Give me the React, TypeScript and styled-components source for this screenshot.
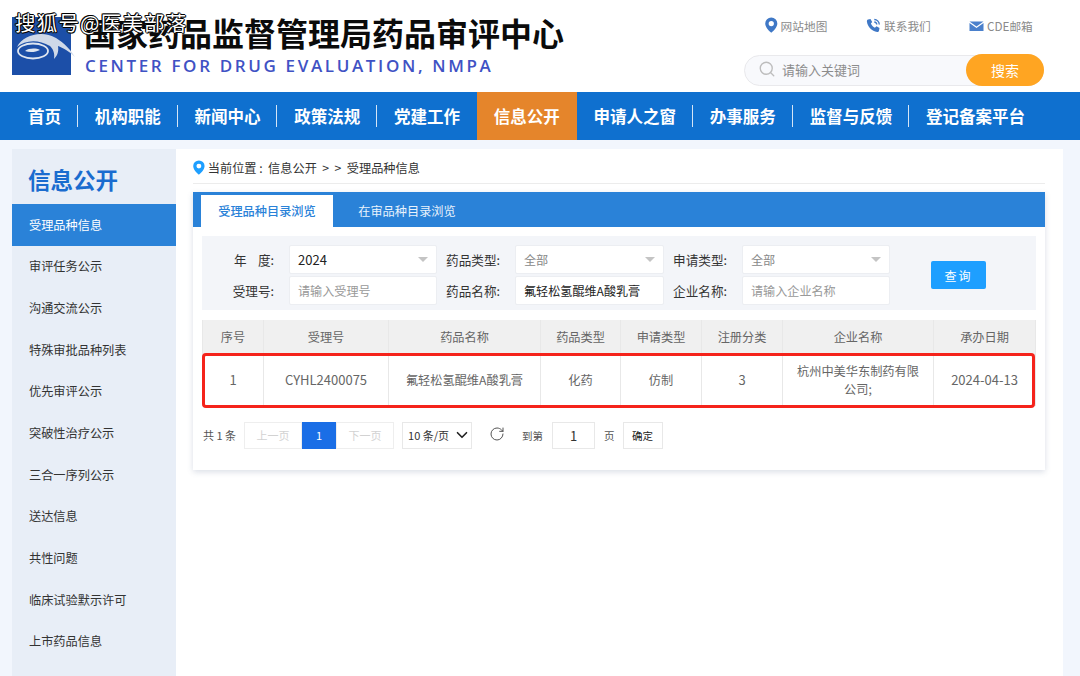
import React from "react";
import styled, { createGlobalStyle } from "styled-components";
import { ChevronDown, RotateCw, Search } from "lucide-react";

const Global = createGlobalStyle`
  html, body { margin: 0; padding: 0; background: #f2f6fd; }
  body { font-family: "Noto Sans CJK SC", "Noto Sans", sans-serif; overflow: hidden; }
  * { box-sizing: border-box; }
`;

const Page = styled.div`
  position: relative;
  width: 1080px;
  height: 676px;
  overflow: hidden;
`;

const Watermark = styled.div`
  position: absolute;
  left: 15px;
  top: 7px;
  font-size: 20.5px;
  line-height: 30px;
  color: #fff;
  letter-spacing: 1.2px;
  text-shadow: 1px 0 0 #000, -1px 0 0 #000, 0 1px 0 #000, 0 -1px 0 #000, 1px 1px 0 #222, -1px -1px 0 #222;
  z-index: 5;
`;

const Header = styled.header`
  height: 92px;
  background: #fff;
  display: flex;
  justify-content: space-between;
  padding: 17px 36px 0 12px;
`;

const Brand = styled.div`
  display: flex;
  gap: 13px;
  align-items: flex-start;
`;

const BrandText = styled.div`
  display: flex;
  flex-direction: column;
`;

const BrandTitle = styled.div`
  font-size: 32px;
  line-height: 30px;
  font-weight: 700;
  color: #0b0b0b;
  white-space: nowrap;
`;

const BrandSub = styled.div`
  margin-top: 9px;
  margin-left: 1px;
  font-family: "Open Sans", sans-serif;
  font-size: 17px;
  line-height: 20px;
  font-weight: 600;
  letter-spacing: 2.64px;
  color: #3f52c4;
  white-space: nowrap;
`;

const HeaderRight = styled.div`
  width: 300px;
  display: flex;
  flex-direction: column;
  align-items: flex-end;
`;

const TopLinks = styled.div`
  display: flex;
  height: 20px;
  margin: -2px 10px 0 0;
  align-items: center;
`;

const TopLink = styled.div<{ $w: number }>`
  width: ${(p) => p.$w}px;
  display: flex;
  align-items: center;
  gap: 3px;
  font-size: 11.7px;
  color: #8a8a8a;
  white-space: nowrap;
`;

const SearchBar = styled.div`
  margin-top: 20px;
  width: 300px;
  height: 31px;
  position: relative;
  display: flex;
  align-items: center;
  padding: 0 0 3px 13px;
  gap: 6px;
  background: #f8f9fc;
  border: 1px solid #e9e9ec;
  border-radius: 16px;
  font-size: 13px;
  color: #8c8c8c;
`;

const SearchBtn = styled.div`
  position: absolute;
  right: -1px;
  top: -2px;
  width: 78px;
  height: 32px;
  border-radius: 16px;
  background: #ffa522;
  color: #fff;
  font-size: 14px;
  display: flex;
  align-items: center;
  justify-content: center;
`;

const Nav = styled.nav`
  height: 48px;
  background: #0f70cf;
  display: flex;
  align-items: center;
  padding-left: 11px;
`;

const NavItem = styled.div<{ $active?: boolean; $sep?: boolean }>`
  height: 48px;
  padding: 0 16.9px;
  display: flex;
  align-items: center;
  font-size: 16.5px;
  font-weight: 700;
  color: #fff;
  white-space: nowrap;
  position: relative;
  background: ${(p) => (p.$active ? "#e5852b" : "transparent")};
  &::after {
    content: "";
    display: ${(p) => (p.$sep ? "block" : "none")};
    position: absolute;
    right: 0;
    top: 13px;
    width: 1px;
    height: 22px;
    background: #d5e5f6;
  }
`;

const Body = styled.div`
  margin: 9px 18px 0 12px;
  display: flex;
  height: 527px;
`;

const Side = styled.aside`
  width: 164px;
  background: #e8eef7;
  flex: none;
`;

const SideTitle = styled.div`
  height: 55px;
  padding: 14px 0 0 16px;
  font-size: 22.5px;
  line-height: 32px;
  font-weight: 700;
  color: #1a6ccf;
`;

const SideItem = styled.div<{ $active?: boolean }>`
  height: 41.65px;
  padding-left: 17px;
  display: flex;
  align-items: center;
  font-size: 12.2px;
  color: ${(p) => (p.$active ? "#fff" : "#333")};
  background: ${(p) => (p.$active ? "#2a82d8" : "transparent")};
`;

const Main = styled.main`
  flex: 1;
  background: #fff;
  padding: 0 18px 0 17px;
`;

const Crumb = styled.div`
  height: 35px;
  display: flex;
  align-items: center;
  gap: 3px;
  padding-top: 3px;
  border-bottom: 1px solid #ececec;
  font-size: 12.2px;
  color: #333;
  white-space: pre;
`;

const Card = styled.section`
  margin-top: 8px;
  height: 278px;
  background: #fff;
  box-shadow: 0 2px 6px rgba(70, 90, 130, 0.2);
`;

const Tabs = styled.div`
  height: 35px;
  background: #2a82d8;
  display: flex;
  align-items: flex-end;
  padding-left: 8px;
`;

const Tab = styled.div<{ $active?: boolean }>`
  width: ${(p) => (p.$active ? 132 : 148)}px;
  height: 32px;
  display: flex;
  align-items: center;
  justify-content: center;
  font-size: 12.2px;
  font-weight: ${(p) => (p.$active ? 500 : 400)};
  color: ${(p) => (p.$active ? "#2a82d8" : "#e8f2fc")};
  background: ${(p) => (p.$active ? "#fff" : "transparent")};
`;

const CardBody = styled.div`
  padding: 9px 9px 0;
`;

const Filter = styled.div`
  height: 74px;
  background: #f3f5f9;
  padding-top: 9px;
  display: grid;
  grid-template-columns: 87px 148px 78px 149px 78px 148px 1fr;
  grid-template-rows: 29px 29px;
  row-gap: 2px;
  align-items: center;
`;

const Label = styled.div`
  text-align: right;
  padding: 0 15px 1px 0;
  font-size: 12.6px;
  color: #333;
  white-space: pre;
`;

const Field = styled.div<{ $dark?: boolean; $hint?: boolean; $num?: boolean }>`
  height: 29px;
  background: #fff;
  border: 1px solid #eceef2;
  border-radius: 2px;
  display: flex;
  align-items: center;
  justify-content: space-between;
  padding: 0 8px 1px 8px;
  font-size: ${(p) => (p.$num ? 13 : 12.1)}px;
  color: ${(p) => (p.$dark ? "#222" : p.$hint ? "#999" : "#888")};
  white-space: nowrap;
`;

const Caret = styled.span`
  width: 0;
  height: 0;
  border-left: 5px solid transparent;
  border-right: 5px solid transparent;
  border-top: 5px solid #c4c4c4;
`;

const QueryCell = styled.div`
  grid-column: 7;
  grid-row: 1 / span 2;
  padding-left: 41px;
`;

const QueryBtn = styled.div`
  width: 55px;
  height: 28px;
  border-radius: 2px;
  background: #1e9fff;
  color: #fff;
  font-size: 12px;
  letter-spacing: 2px;
  display: flex;
  align-items: center;
  justify-content: center;
`;

const TableWrap = styled.div`
  position: relative;
  margin-top: 10px;
`;

const Table = styled.table`
  width: 833px;
  table-layout: fixed;
  border-collapse: collapse;
  font-size: 12.2px;
  color: #666;
  text-align: center;
`;

const Th = styled.th`
  height: 34px;
  padding: 0;
  background: #f0f0f0;
  font-weight: 400;
  border: 1px solid #e8e8e8;
  border-top: 0;
`;

const Td = styled.td<{ $num?: boolean }>`
  height: 51px;
  padding: 0 12px;
  line-height: 18px;
  font-size: ${(p) => (p.$num ? 13 : 12.2)}px;
  border: 1px solid #e8e8e8;
`;

const Highlight = styled.div`
  position: absolute;
  left: 0;
  top: 33px;
  width: 833px;
  height: 55px;
  border: 3px solid #f5231b;
  border-radius: 4px;
  pointer-events: none;
`;

const Pager = styled.div`
  margin-top: 16px;
  height: 27px;
  display: flex;
  align-items: center;
  font-size: 11px;
  color: #555;
`;

const PagerCount = styled.span`
  margin: 0 8px 0 1px;
  white-space: pre;
`;

const PageBtn = styled.div<{ $w: number; $active?: boolean; $muted?: boolean }>`
  width: ${(p) => p.$w}px;
  height: 27px;
  display: flex;
  align-items: center;
  justify-content: center;
  border: 1px solid ${(p) => (p.$active ? "#1a6ee6" : "#eeeeee")};
  background: ${(p) => (p.$active ? "#1a6ee6" : "#fff")};
  color: ${(p) => (p.$active ? "#fff" : p.$muted ? "#d2d2d2" : "#333")};
  font-size: 11px;
`;

const SizeSelect = styled.div`
  margin-left: 8px;
  width: 70px;
  height: 27px;
  border: 1px solid #e8e8e8;
  padding: 0 0 0 5px;
  display: flex;
  align-items: center;
  justify-content: space-between;
  font-size: 11px;
  color: #333;
  white-space: nowrap;
`;

const RefreshSlot = styled.div`
  margin: 0 0 3px 17px;
  width: 16px;
  display: flex;
  color: #555;
`;

const PagerText = styled.span<{ $l: number; $r: number }>`
  margin: 0 ${(p) => p.$r}px 0 ${(p) => p.$l}px;
  font-size: 10.5px;
  white-space: nowrap;
`;

const PagerInput = styled(PageBtn)`
  font-size: 13px;
  border-color: #e8e8e8;
`;

const ConfirmBtn = styled(PageBtn)`
  font-size: 10.5px;
  border-color: #e8e8e8;
  color: #222;
`;

const Pin = ({ c, s }: { c: string; s: number }) => (
  <svg width={(s * 11) / 14} height={s} viewBox="1.5 0 11 14" aria-hidden="true">
    <path
      fillRule="evenodd"
      d="M7 0.400a5.300 5.300 0 0 1 5.300 5.300c0 3.300-3.600 6.800-5.300 8.100-1.700-1.300-5.300-4.800-5.300-8.100A5.300 5.300 0 0 1 7 0.400zm0 3a2.300 2.300 0 1 0 0 4.600 2.300 2.300 0 0 0 0-4.600z"
      fill={c}
    />
  </svg>
);

const Phone = () => (
  <svg width="15" height="15" viewBox="0 0 15 15" aria-hidden="true">
    <path d="M2 1.500 4.500 1l1.700 3-1.300 1.500c.7 1.700 2.200 3.300 4 4.200L10.500 8.300l3 1.700-.5 2.800c-.2.900-1 1.300-1.900 1.200C6 13.300 1.500 9 .9 3.600.8 2.600 1.200 1.800 2 1.500z" fill="#3f78c6" />
    <path d="M8.300 1.500a5.300 5.300 0 0 1 5 5M8.300 4a2.800 2.800 0 0 1 2.500 2.500" fill="none" stroke="#3f78c6" strokeWidth="1.300" />
  </svg>
);

const Mail = () => (
  <svg width="15" height="15" viewBox="0 0 15 15" aria-hidden="true">
    <path d="M0.500 3.500h14L7.500 8.500z" fill="#4a80cc" />
    <path d="M0.500 5v8h14V5L7.500 10z" fill="#4a80cc" />
  </svg>
);

const LogoSvg = styled.svg`
  flex: none;
  overflow: visible;
`;

const Logo = () => (
  <LogoSvg width="59" height="58" viewBox="0 0 59 58" aria-hidden="true">
    <rect width="59" height="58" fill="#1c4fa8" />
    <path d="M5 30C11 18 30 13 44 21c8 5 15 12 19 19-6-6-12-9-17-11 1 6-1 10-4 13 1-6-1-10-4-13C26 22 13 23 5 30z" fill="#cfd9e8" />
    <ellipse cx="21" cy="34" rx="15" ry="7.500" fill="none" stroke="#dfe6f0" strokeWidth="1.800" />
    <path d="M13 34c4-3 11-3 15-1-4 2-10 3-15 1z" fill="#dfe6f0" />
  </LogoSvg>
);

const navs = ["首页", "机构职能", "新闻中心", "政策法规", "党建工作", "信息公开", "申请人之窗", "办事服务", "监督与反馈", "登记备案平台"];
const sides = ["受理品种信息", "审评任务公示", "沟通交流公示", "特殊审批品种列表", "优先审评公示", "突破性治疗公示", "三合一序列公示", "送达信息", "共性问题", "临床试验默示许可", "上市药品信息"];
const cols = [61, 125, 152, 80, 81, 81, 151, 102];
const heads = ["序号", "受理号", "药品名称", "药品类型", "申请类型", "注册分类", "企业名称", "承办日期"];
const row = ["1", "CYHL2400075", "氟轻松氢醌维A酸乳膏", "化药", "仿制", "3", "杭州中美华东制药有限公司;", "2024-04-13"];
const numeric = new Set([0, 1, 5, 7]);

export default function App() {
  return (
    <Page>
      <Global />
      <Watermark>搜狐号@医美部落</Watermark>
      <Header>
        <Brand>
          <Logo />
          <BrandText>
            <BrandTitle>国家药品监督管理局药品审评中心</BrandTitle>
            <BrandSub>CENTER FOR DRUG EVALUATION, NMPA</BrandSub>
          </BrandText>
        </Brand>
        <HeaderRight>
          <TopLinks>
            <TopLink $w={101}>
              <Pin c="#3f78c6" s={16} />
              网站地图
            </TopLink>
            <TopLink $w={103}>
              <Phone />
              联系我们
            </TopLink>
            <TopLink $w={65}>
              <Mail />
              CDE邮箱
            </TopLink>
          </TopLinks>
          <SearchBar>
            <Search size={18} color="#bdbdbd" strokeWidth={1.8} />
            请输入关键词
            <SearchBtn>搜索</SearchBtn>
          </SearchBar>
        </HeaderRight>
      </Header>
      <Nav>
        {navs.map((n, i) => (
          <NavItem key={n} $active={n === "信息公开"} $sep={i !== 4 && i !== 5 && i !== 9}>
            {n}
          </NavItem>
        ))}
      </Nav>
      <Body>
        <Side>
          <SideTitle>信息公开</SideTitle>
          {sides.map((s, i) => (
            <SideItem key={s} $active={i === 0}>
              {s}
            </SideItem>
          ))}
        </Side>
        <Main>
          <Crumb>
            <Pin c="#1e9fff" s={15} />
            当前位置 :  信息公开  &gt;  &gt;  受理品种信息
          </Crumb>
          <Card>
            <Tabs>
              <Tab $active>受理品种目录浏览</Tab>
              <Tab>在审品种目录浏览</Tab>
            </Tabs>
            <CardBody>
              <Filter>
                <Label>年    度:</Label>
                <Field $dark $num>
                  2024
                  <Caret />
                </Field>
                <Label>药品类型:</Label>
                <Field>
                  全部
                  <Caret />
                </Field>
                <Label>申请类型:</Label>
                <Field>
                  全部
                  <Caret />
                </Field>
                <QueryCell>
                  <QueryBtn>查询</QueryBtn>
                </QueryCell>
                <Label>受理号:</Label>
                <Field $hint>请输入受理号</Field>
                <Label>药品名称:</Label>
                <Field $dark>氟轻松氢醌维A酸乳膏</Field>
                <Label>企业名称:</Label>
                <Field $hint>请输入企业名称</Field>
              </Filter>
              <TableWrap>
                <Table>
                  <colgroup>
                    {cols.map((w, i) => (
                      <col key={i} width={w} />
                    ))}
                  </colgroup>
                  <thead>
                    <tr>
                      {heads.map((h) => (
                        <Th key={h}>{h}</Th>
                      ))}
                    </tr>
                  </thead>
                  <tbody>
                    <tr>
                      {row.map((c, i) => (
                        <Td key={i} $num={numeric.has(i)}>{c}</Td>
                      ))}
                    </tr>
                  </tbody>
                </Table>
                <Highlight />
              </TableWrap>
              <Pager>
                <PagerCount>共 1 条</PagerCount>
                <PageBtn $w={58} $muted>上一页</PageBtn>
                <PageBtn $w={34} $active>1</PageBtn>
                <PageBtn $w={58} $muted>下一页</PageBtn>
                <SizeSelect>
                  10 条/页
                  <ChevronDown size={18} color="#222" strokeWidth={2.2} />
                </SizeSelect>
                <RefreshSlot>
                  <RotateCw size={16} strokeWidth={1.5} />
                </RefreshSlot>
                <PagerText $l={17} $r={9}>到第</PagerText>
                <PagerInput $w={43}>1</PagerInput>
                <PagerText $l={9} $r={8}>页</PagerText>
                <ConfirmBtn $w={40}>确定</ConfirmBtn>
              </Pager>
            </CardBody>
          </Card>
        </Main>
      </Body>
    </Page>
  );
}
